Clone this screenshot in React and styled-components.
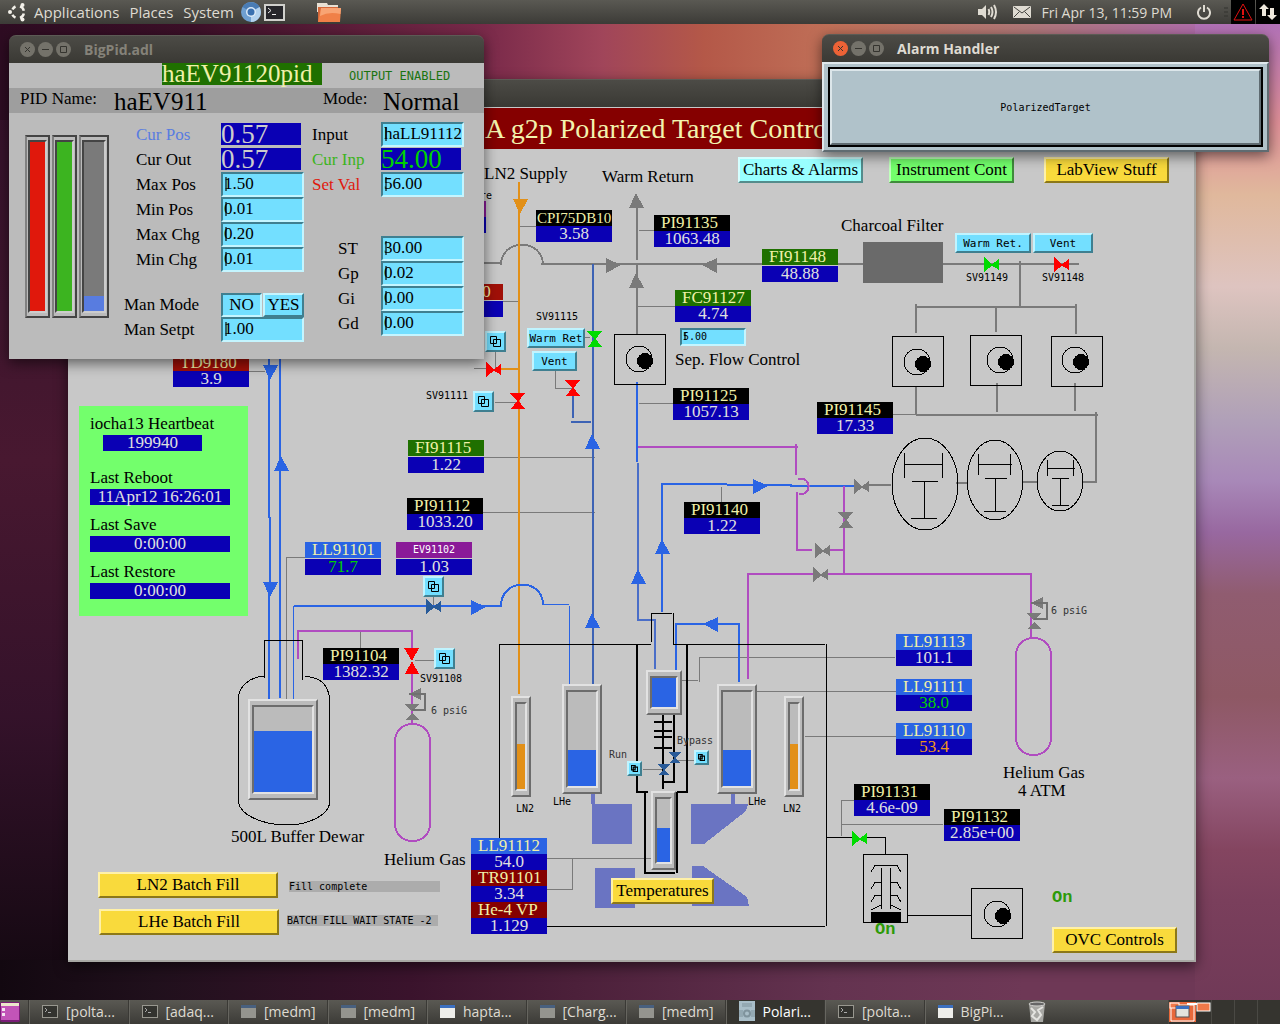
import { useState } from "react";
import styled, { createGlobalStyle, css } from "styled-components";

const SERIF = `"Liberation Serif", "Times New Roman", serif`;
const MONO = `"DejaVu Sans Mono", "Liberation Mono", monospace`;
const SANS = `"Open Sans", "Noto Sans", sans-serif`;

const GlobalStyle = createGlobalStyle`
  * {
    box-sizing: border-box;
  }

  body {
    margin: 0;
    overflow: hidden;
    background: #2c1022;
  }

  button,
  input {
    font: inherit;
    margin: 0;
  }
`;

const Desktop = styled.div`
  position: relative;
  display: grid;
  grid-template-rows: 24px 1fr 24px;
  min-height: 100vh;
  overflow: hidden;
  font-family: ${SANS};
  background:
    linear-gradient(to bottom, #b070b8 2%, #e09098 12%, #e0b89c 19%, #dec4c0 28%, #c4b6b0 34%, #b0a0b8 41%, #a888b8 47%, #9868a0 52%, #905c70 58%, #8e5864 68%, #9a6080 76%, #844560 83%, #7a3f5c 88%, #6e3856 100%)
      right top / 85px 100% no-repeat,
    linear-gradient(to right, #120810, #20101c 12%, #3a132c 32%, #4c203a 45%, #643350 65%, #6e3856 80%, #6e3856)
      left bottom / 100% 64px no-repeat,
    linear-gradient(to right, #2e0c22, #3c1028 15%, #7a2a4a 38%, #a0455a 47%, #b45848 55%, #c07058 65%, #b07878 80%, #b068c0)
      left top / 100% 120px no-repeat,
    linear-gradient(to bottom, #30102a, #40162e 30%, #481830 45%, #34122a 70%, #120810 97%);
`;

const Panel = styled.header`
  display: flex;
  align-items: center;
  padding-left: 7px;
  background: linear-gradient(#5a5953, #3c3b37);
  color: #dfdbd2;
  font-size: 14px;
`;

const MenuLink = styled.a`
  margin-left: 10px;
  color: inherit;
  font-size: 15px;
  line-height: 20px;
  text-decoration: none;
  white-space: nowrap;

  &:first-of-type {
    margin-left: 7px;
  }
`;

const Launchers = styled.div`
  display: flex;
  align-items: center;
  gap: 3px;
  margin-left: 7px;

  svg:last-child {
    margin-left: 29px;
  }
`;

const Tray = styled.div`
  display: flex;
  align-items: center;
  align-self: stretch;
  margin-left: auto;
`;

const Clock = styled.time`
  margin: 0 25px 0 10px;
  white-space: nowrap;
`;

const TrayBox = styled.div`
  display: flex;
  align-items: center;
  justify-content: center;
  align-self: stretch;
  width: 24px;
  margin-left: 1px;
  background: #000;
`;

const Taskbar = styled.footer`
  grid-row: 3;
  display: flex;
  align-items: stretch;
  background: linear-gradient(#5a5953, #3c3b37);
  color: #dfdbd2;
  font-size: 14px;

  > svg {
    flex: none;
  }
`;

const Tasks = styled.nav`
  display: flex;
  flex: 0 1 995px;
  margin-left: 8px;
`;

const Task = styled.button`
  display: flex;
  align-items: center;
  gap: 8px;
  flex: 1;
  padding: 0 0 2px 13px;
  border: 0;
  border-left: 1px solid #3a3935;
  box-shadow: inset 1px 0 #66655f;
  background: ${({ $active }) => ($active ? "#35342f" : "transparent")};
  color: ${({ $active }) => ($active ? "#fff" : "#dfdbd2")};
  white-space: nowrap;
`;

const Workspaces = styled.div`
  display: grid;
  grid-template-columns: repeat(4, 1fr);
  width: 112px;
  margin-left: auto;
  background: #35342f;
`;

const Workspace = styled.div`
  border-left: 1px solid #4a4944;
`;

const Frame = styled.section`
  position: absolute;
  display: flex;
  flex-direction: column;
  border-radius: 7px 7px 0 0;
  box-shadow: 0 4px 14px rgba(0, 0, 0, 0.55);
`;

const MainFrame = styled(Frame)`
  top: 79px;
  left: 68px;
  width: 1128px;
  height: 883px;
`;

const PidFrame = styled(Frame)`
  top: 35px;
  left: 9px;
  width: 475px;
`;

const AlarmFrame = styled(Frame)`
  top: 34px;
  right: 11px;
  width: 447px;
`;

const TitleBar = styled.div`
  display: flex;
  align-items: center;
  gap: 3px;
  flex: none;
  height: 28px;
  padding-left: 11px;
  border-radius: 7px 7px 0 0;
  border-top: 1px solid #5c5b55;
  background: linear-gradient(#4c4b46, #3a3934);
  color: ${({ $active }) => ($active ? "#dfdbd2" : "#858279")};
  font-size: 14px;
  font-weight: 700;

  span {
    margin-left: 10px;
  }
`;

const RoundButton = styled.button`
  display: flex;
  padding: 0;
  border: 0;
  border-radius: 50%;
  background: ${({ $hot }) => ($hot ? "#ec6236" : "#74726a")};
  color: #35342f;
`;

const bevel = (light, dark) => css`
  border-style: solid;
  border-width: 2px;
  border-color: ${light} ${dark} ${dark} ${light};
`;

/* Schematic: free canvas, nodes keep their place on the drawing */

const ORIGIN = { x: 68, y: 107 };

const placed = css`
  position: absolute;
  left: ${({ $x }) => $x - ORIGIN.x}px;
  top: ${({ $y }) => $y - ORIGIN.y}px;
`;

const Canvas = styled.div`
  position: relative;
  flex: 1;
  overflow: hidden;
  border-right: 2px solid #a8a8a4;
  border-bottom: 2px solid #a8a8a4;
  background: #c8c8c8;
  font-family: ${SERIF};
  font-size: 17px;
`;

const Headline = styled.h1`
  height: 42px;
  margin: 0;
  padding-left: 417px;
  border-top: 1px solid #c8c8c8;
  background: #850000;
  color: #f3f3ae;
  font-size: 28px;
  font-weight: 400;
  line-height: 41px;
  white-space: nowrap;
`;

const Drawing = styled.svg`
  position: absolute;
  left: 0;
  top: 0;
  shape-rendering: crispEdges;
`;

const Label = styled.div`
  ${placed}
  color: ${({ $color }) => $color || "#000"};
  line-height: 18px;
  white-space: nowrap;
`;

const SmallLabel = styled(Label)`
  font-family: ${MONO};
  font-size: 10px;
  line-height: 12px;
`;

const StateLabel = styled(Label)`
  color: #2c9a08;
  font-family: "Liberation Mono", monospace;
  font-size: 17px;
  font-weight: 700;
`;

const TagBox = styled.div`
  ${placed}
  width: 76px;
  line-height: 16px;
`;

const TagName = styled.div`
  height: 16px;
  margin-bottom: ${({ $gap }) => $gap}px;
  padding-left: 7px;
  background: ${({ $bg }) => $bg};
  color: #f0f0a8;
  white-space: nowrap;

  ${({ $compact }) =>
    $compact &&
    css`
      padding-left: 1px;
      font-size: 15px;
    `}

  ${({ $small }) =>
    $small &&
    css`
      padding: 0;
      color: #fff;
      font-family: ${MONO};
      font-size: 10px;
      text-align: center;
    `}
`;

const Readout = styled.div`
  height: 16px;
  background: #0a00b4;
  color: ${({ $color }) => $color || "#e0e0e0"};
  line-height: 16px;
  text-align: center;
  white-space: nowrap;
`;

const PushButton = styled.button`
  ${placed}
  width: ${({ $w }) => $w}px;
  height: 26px;
  padding: 0;
  ${({ $light, $dark }) => bevel($light, $dark)}
  background: ${({ $bg }) => $bg};
  color: #000;
  line-height: 20px;
  white-space: nowrap;
`;

const ValveButton = styled(PushButton)`
  height: 20px;
  font-family: ${MONO};
  font-size: 11px;
  line-height: 15px;
`;

const IconButton = styled.button`
  ${placed}
  display: flex;
  align-items: center;
  justify-content: center;
  width: ${({ $size }) => $size}px;
  height: ${({ $size }) => $size}px;
  padding: 0;
  ${bevel("#c0f4ff", "#3f7f90")}
  background: #73dfff;
`;

const entryLook = css`
  ${bevel("#3f7f90", "#c4f5ff")}
  outline: 0;
  background: linear-gradient(#30606c, #30606c) 2px 3px / 2px calc(100% - 7px) no-repeat #73dfff;
  color: #000;
`;

const FlowEntry = styled.input`
  ${placed}
  ${entryLook}
  width: 66px;
  height: 18px;
  padding: 0 1px 2px;
  font-family: ${MONO};
  font-size: 10px;
`;

const Message = styled.output`
  ${placed}
  width: 151px;
  height: 11px;
  background: #acacac;
  font-family: ${MONO};
  font-size: 10px;
  line-height: 11px;
  white-space: nowrap;
`;

const GaugeBox = styled.div`
  ${placed}
  width: ${({ $w }) => $w}px;
  height: ${({ $h }) => $h}px;
  padding: 4px 2px;
  ${bevel("#e2e2e2", "#6c6c6c")}
  background: #bbb;
`;

const GaugeWell = styled.div`
  display: flex;
  align-items: flex-end;
  height: 100%;
  ${bevel("#6c6c6c", "#e2e2e2")}
`;

const GaugeFill = styled.div`
  width: 100%;
  background: ${({ $color }) => $color};
`;

const Heartbeat = styled.div`
  ${placed}
  width: 169px;
  height: 210px;
  padding: 9px 18px 0 11px;
  background: #73ff6c;
  line-height: 18px;

  p {
    margin: 0 0 2px;
  }

  div + p {
    margin-top: 11px;
  }
`;

const HeartbeatCount = styled(Readout)`
  width: 99px;
  margin: 0 0 18px 13px;
`;

/* PID dialog */

const PidPanel = styled.form`
  height: 296px;
  overflow: hidden;
  background: #bbb;
  font-family: ${SERIF};
  font-size: 17px;
`;

const PidHead = styled.div`
  display: flex;
  height: 25px;
  padding-left: 153px;
`;

const PidTitle = styled.div`
  width: 160px;
  height: 22px;
  background: #1f7000;
  color: #f0f0a8;
  font-size: 25px;
  line-height: 22px;
`;

const PidStatus = styled.div`
  margin-left: 27px;
  color: #1a7410;
  font-family: ${MONO};
  font-size: 12px;
  line-height: 26px;
`;

const PidNameRow = styled.div`
  display: grid;
  grid-template-columns: 94px 209px 60px 1fr;
  height: 25px;
  padding-left: 11px;
  background: #9e9e9e;
  line-height: 22px;

  strong {
    font-size: 25px;
    font-weight: 400;
    line-height: 28px;
  }
`;

const PidBody = styled.div`
  display: flex;
  padding: 9px 0 0 16px;
`;

const Bars = styled.div`
  display: flex;
  gap: 2px;
  margin-top: 13px;
`;

const Bar = styled.div`
  width: ${({ $w }) => $w}px;
  height: 183px;
  padding: 3px 1px;
  border-style: solid;
  border-width: 2px;
  border-color: #444 #444 #444 #808080;
  background: #bbb;
`;

const BarWell = styled(GaugeWell)`
  border-color: #444 #ccc #ccc #444;
  background: #7a7a7a;
`;

const Fields = styled.div`
  display: grid;
  grid-template-columns: ${({ $cols }) => $cols};
  grid-auto-rows: minmax(25px, auto);
  align-content: start;
  align-items: center;
  margin-left: ${({ $left }) => $left}px;
`;

const FieldLabel = styled.label`
  padding-left: ${({ $indent }) => $indent || 0}px;
  color: ${({ $color }) => $color || "#000"};
`;

const Entry = styled.input`
  ${entryLook}
  width: 83px;
  height: 25px;
  padding: 0 1px 2px;
`;

const BigReadout = styled.output`
  align-self: start;
  width: 80px;
  height: 22px;
  margin-top: 1px;
  background: #0a00b4;
  color: ${({ $color }) => $color};
  font-size: 27px;
  line-height: 23px;
`;

const Gap = styled.div`
  grid-column: 1 / -1;
  height: ${({ $h }) => $h}px;
`;

/* a gap shorter than a full row: the rows after it move up */
const Rows = styled(Fields)`
  grid-column: 1 / -1;
  margin-top: ${({ $top }) => $top}px;
`;

const Toggle = styled.div`
  display: flex;
  gap: 1px;
`;

const ToggleButton = styled.button`
  width: 41px;
  height: 24px;
  padding: 0;
  ${({ $on }) => ($on ? bevel("#3f7f90", "#c4f5ff") : bevel("#c4f5ff", "#3f7f90"))}
  background: #73dfff;
  color: #000;
  line-height: 18px;
`;

const AlarmPanel = styled.div`
  padding: 5px 6px;
  ${bevel("#dfe8ec", "#5f6b71")}
  background: #b0c2ca;
`;

const AlarmButton = styled.button`
  display: block;
  width: 100%;
  height: 76px;
  ${bevel("#dce6ea", "#5f6b71")}
  outline: 2px solid #000;
  background: #b0c2ca;
  color: #000;
  font-family: ${MONO};
  font-size: 10px;
`;

const YELLOW = { $bg: "#f9da3c", $light: "#fff1a8", $dark: "#8c7818" };
const SKY = { $bg: "#73dfff", $light: "#c0f4ff", $dark: "#3f7f90" };
const BLUE = "#2a64e4";
const STEEL = "#3c62b4";
const GRAY = "#7a7a7a";
const MAGENTA = "#b04cc0";
const ORANGE = "#e29018";
const NAVY = "#285a98";
const RED = "#ff0000";
const GREEN = "#00dc00";

const tags = [
  { x: 536, y: 210, name: "CPI75DB10", value: "3.58", bg: "#000", compact: true },
  { x: 654, y: 215, name: "PI91135", value: "1063.48", bg: "#000" },
  { x: 762, y: 249, name: "FI91148", value: "48.88", bg: "#1f7000", gap: 1 },
  { x: 675, y: 290, name: "FC91127", value: "4.74", bg: "#1f7000" },
  { x: 673, y: 388, name: "PI91125", value: "1057.13", bg: "#000" },
  { x: 408, y: 440, name: "FI91115", value: "1.22", bg: "#1f7000", gap: 1 },
  { x: 407, y: 498, name: "PI91112", value: "1033.20", bg: "#000" },
  { x: 305, y: 542, name: "LL91101", value: "71.7", bg: BLUE, color: "#00d000", gap: 1 },
  { x: 396, y: 542, name: "EV91102", value: "1.03", bg: "#8a1a98", gap: 1, small: true },
  { x: 684, y: 502, name: "PI91140", value: "1.22", bg: "#000" },
  { x: 323, y: 648, name: "PI91104", value: "1382.32", bg: "#000" },
  { x: 173, y: 355, name: "TD9180", value: "3.9", bg: "#a01008" },
  { x: 410, y: 201, name: "", value: "", bg: "#8a1a98" },
  { x: 427, y: 284, name: "TD9120", value: "", bg: "#a01008", gap: 1 },
  { x: 817, y: 402, name: "PI91145", value: "17.33", bg: "#000" },
  { x: 896, y: 634, name: "LL91113", value: "101.1", bg: BLUE },
  { x: 896, y: 679, name: "LL91111", value: "38.0", bg: BLUE, color: "#00d000" },
  { x: 896, y: 723, name: "LL91110", value: "53.4", bg: BLUE, color: "#f09818" },
  { x: 854, y: 784, name: "PI91131", value: "4.6e-09", bg: "#000" },
  { x: 944, y: 809, name: "PI91132", value: "2.85e+00", bg: "#000" },
  { x: 471, y: 838, name: "LL91112", value: "54.0", bg: BLUE },
  { x: 471, y: 870, name: "TR91101", value: "3.34", bg: "#850000" },
  { x: 471, y: 902, name: "He-4 VP", value: "1.129", bg: "#850000" },
];

const labels = [
  [484, 165, "LN2 Supply"],
  [602, 168, "Warm Return"],
  [841, 217, "Charcoal Filter"],
  [675, 351, "Sep. Flow Control"],
  [231, 828, "500L Buffer Dewar"],
  [384, 851, "Helium Gas"],
  [1003, 764, "Helium Gas"],
  [1018, 782, "4 ATM"],
];

const smallLabels = [
  [966, 272, "SV91149"],
  [1042, 272, "SV91148"],
  [536, 311, "SV91115"],
  [426, 390, "SV91111"],
  [420, 673, "SV91108"],
  [480, 190, "re"],
  [431, 705, "6 psiG", "#333"],
  [1051, 605, "6 psiG", "#333"],
  [609, 749, "Run", "#333"],
  [677, 735, "Bypass", "#333"],
  [553, 796, "LHe"],
  [516, 803, "LN2"],
  [748, 796, "LHe"],
  [783, 803, "LN2"],
];

const gauges = [
  { x: 248, y: 699, w: 70, h: 101, level: 72, color: BLUE },
  { x: 562, y: 684, w: 40, h: 110, level: 38, color: BLUE },
  { x: 717, y: 684, w: 40, h: 110, level: 38, color: BLUE },
  { x: 511, y: 696, w: 20, h: 101, level: 53, color: ORANGE },
  { x: 784, y: 696, w: 20, h: 101, level: 53, color: ORANGE },
  { x: 646, y: 670, w: 36, h: 45, level: 100, color: BLUE },
  { x: 651, y: 791, w: 25, h: 79, level: 54, color: BLUE },
];

const iconButtons = [
  [485, 331, 21],
  [473, 391, 21],
  [423, 576, 21],
  [434, 648, 21],
  [627, 761, 15],
  [694, 750, 15],
];

const arrowShapes = {
  up: "M0 15 L7 0 L15 15Z",
  down: "M0 0 H15 L7 15Z",
  left: "M15 0 V15 L0 7Z",
  right: "M0 0 L15 7 L0 15Z",
};

const arrows = [
  ["down", 513, 199, ORANGE],
  ["right", 606, 258, GRAY],
  ["left", 702, 258, GRAY],
  ["up", 629, 193, GRAY],
  ["up", 629, 273, GRAY],
  ["right", 753, 479, BLUE],
  ["up", 655, 539, BLUE],
  ["up", 631, 569, BLUE],
  ["up", 585, 434, BLUE],
  ["up", 585, 613, BLUE],
  ["left", 703, 617, BLUE],
  ["down", 263, 365, BLUE],
  ["up", 274, 456, BLUE],
  ["down", 263, 582, BLUE],
  ["right", 471, 600, BLUE],
];

const valveShapes = {
  h: "M0 0 L9 8 L0 15Z M15 2 V13 L7 8Z",
  v: "M0 0 H15 L8 9Z M1 16 H15 L8 7Z",
  tall: "M0 0 H15 L8 13Z M1 26 H15 L8 13Z",
  small: "M0 0 H12 L6 7Z M1 11 H11 L6 5Z",
};

const valves = [
  ["h", 984, 257, GREEN],
  ["h", 1054, 257, RED],
  ["h", 852, 831, GREEN],
  ["h", 486, 362, RED],
  ["v", 587, 331, GREEN],
  ["v", 510, 393, RED],
  ["v", 565, 380, RED],
  ["h", 854, 479, GRAY],
  ["v", 838, 512, GRAY],
  ["h", 815, 543, GRAY],
  ["h", 813, 567, GRAY],
  ["h", 426, 599, NAVY],
  ["tall", 404, 648, RED],
  ["small", 669, 752, NAVY],
  ["small", 658, 764, NAVY],
];

const pumps = [
  [614, 334, 25, 25],
  [892, 336, 25, 26],
  [970, 335, 30, 25],
  [1051, 336, 24, 24],
  [971, 888, 26, 26],
];

const Pump = ({ x, y, cx, cy }) => (
  <g transform={`translate(${x} ${y})`}>
    <path d="M0.5 0.5 H51.5 V50.5 H0.5Z" fill="none" stroke="#000" />
    <circle cx={cx} cy={cy} r="13" fill="none" stroke="#000" />
    <circle cx={cx + 6} cy={cy + 2} r="8" />
  </g>
);

const Regulator = ({ x, y }) => (
  <g transform={`translate(${x} ${y})`} fill={GRAY}>
    <path d="M5 -10 L17 -16 V-4Z M0 0 H15 L8 7Z M1 16 H15 L8 9Z" />
    <path d="M5 -10 H21 V6 H8" fill="none" stroke="#707070" strokeWidth="2" />
  </g>
);

const Cylinder = ({ x, y, h }) => (
  <rect x={x} y={y} width="35" height={h} rx="17" fill="none" stroke={MAGENTA} strokeWidth="2" />
);

const Pipes = ({ d, color, width = 2 }) => (
  <path d={d} fill="none" stroke={color} strokeWidth={width} />
);

const Piping = () => (
  <Drawing width="1126" height="853" viewBox="68 107 1126 853" aria-hidden="true">
    {/* sensor leads */}
    <Pipes
      color={GRAY}
      width={1}
      d="M519 226.5H536 M639 230.5H654 M638 306.5H675 M639 403.5H675 M249 371.5H265
        M484 457.5H595 M481 512.5H595 M893 414.5H916 M721.5 487V502 M360.5 632V648
        M286.5 700V557.5H305 M415 660.5H434 M433.5 596V606 M583 337.5H590
        M474 368.5H486 M495.5 351V369 M495 402.5H520 M555.5 371V388.5H572 M503 301.5H518
        M643 769.5H665 M675 760.5H694 M682 680.5H698 M699.5 682V657.5H895
        M757 691.5H902 M805 736.5H898 M547 858.5H651 M572.5 858V889.5H547
        M841.5 836V800.5H854 M841 824.5H943"
    />
    <Pipes
      color={GRAY}
      d="M484 263H501 M501 265C501 238 543 238 543 265 M541 264H863 M943 264H1079
        M637 208V260 M637 265V334 M1020 261V306 M915 307H1077
        M916 304V333 M996 307V332 M1076 304V334 M916 387V415 M997 383V412 M1075 383V411
        M916 415H1098 M1096 412V482H1083 M956 483H967 M1023 482H1037 M868 485H891"
    />
    <Pipes color={ORANGE} d="M519 182V694 M501 369H518" />
    <Pipes color={STEEL} d="M593 264V684 M573 396V418 M571 422H591" />
    <Pipes color="#4a6ec8" d="M638 463V620H655V669" />
    <Pipes
      color={BLUE}
      d="M637 382V462 M662 612V484H727 M727 485H791V486H854 M269 358V518 M270 517V583
        M269 583V699 M280 358V698 M294 606H501V604C503 578 543 578 543 605
        M676 670V624H739V682"
    />
    <Pipes color={BLUE} width={1} d="M293.5 606V699 M543 604.5H569 M569.5 606V684" />
    <Pipes
      color={MAGENTA}
      d="M638 447H798 M796 444V475 M798 479C812 476 812 496 799 494 M797 492V550H812
        M828 550H845 M844 486V574 M748 574H813 M828 574H1031V637 M748 573V679
        M298 659V631H412V648 M412 674V724"
    />
    <Cylinder x={395} y={724} h={117} />
    <Cylinder x={1016} y={638} h={117} />
    <Regulator x={404} y={704} />
    <Regulator x={1026} y={613} />

    {/* cryostat walls */}
    <Pipes
      color="#000"
      width={1}
      d="M499.5 838V644.5H651 M651.5 642V613.5H672 M673.5 613V644.5H825 M826.5 644V926
        M547 926.5H825 M826 837.5H852 M867 837.5H885.5V854
        M264.5 678V640.5H302.5V680
        M264 676C250 677 239 686 238.5 698V802C240 815 262 825 288 825C308 825 328 815 329.5 804V698C328 685 320 677 305 676.5"
    />
    <Pipes
      color="#000"
      d="M637 644V792H648 M687 644V792H677 M645 792V873H675 M677 792V873
        M663 715V789 M654 722H672 M654 731H672 M654 737H672 M654 748H672 M674 715V782H663"
    />

    {/* magnet coils */}
    <path
      fill="#6a74c2"
      d="M592 804H632V844H592Z M595 868H635V908H595Z M691 804H748L746 811L704 844H691Z
        M692 866H703L747 897L749 906H692Z M591 794H595V804H591Z M731 794H735V804H731Z"
    />
    <rect x="863" y="242" width="80" height="41" fill="#6a6a6a" />

    {/* root blowers */}
    <g fill="none" stroke="#000">
      <ellipse cx="925" cy="484" rx="33" ry="46" />
      <ellipse cx="995" cy="480" rx="28" ry="40" />
      <ellipse cx="1060" cy="481" rx="23" ry="30" />
      <path
        d="M904.5 453V478 M942.5 453V478 M904 464.5H942 M912 481.5H938 M924.5 481V518 M911 518.5H937
          M978.5 454V475 M1010.5 454V475 M978 464.5H1012 M985 478.5H1007 M995.5 478V511 M984 511.5H1006
          M1047.5 460V476 M1073.5 460V476 M1047 468.5H1075 M1052 478.5H1069 M1060.5 478V505 M1052 505.5H1069"
      />
    </g>

    {/* turbo pump */}
    <path
      fill="none"
      stroke="#000"
      d="M863.5 854.5H907.5V922.5H863.5Z M881.5 868V909 M890.5 868V909
        M871 872L875 865.5H897L901 872 M871 889L875 882.5H881 M891 882.5H897L901 889
        M871 902L875 895.5H881 M891 895.5H897L901 902 M871 910L881 905 M891 905L901 910
        M908 915.5H971"
    />
    <rect x="871" y="912" width="30" height="10" />

    {pumps.map(([x, y, cx, cy]) => (
      <Pump key={x} x={x} y={y} cx={cx} cy={cy} />
    ))}
    {arrows.map(([dir, x, y, color], i) => (
      <path key={i} d={arrowShapes[dir]} fill={color} transform={`translate(${x} ${y})`} />
    ))}
    {valves.map(([kind, x, y, color], i) => (
      <path key={i} d={valveShapes[kind]} fill={color} transform={`translate(${x} ${y})`} />
    ))}
  </Drawing>
);

const Tag = ({ tag }) => (
  <TagBox $x={tag.x} $y={tag.y}>
    <TagName $bg={tag.bg} $gap={tag.gap || 0} $small={tag.small} $compact={tag.compact}>
      {tag.name}
    </TagName>
    <Readout $color={tag.color}>{tag.value}</Readout>
  </TagBox>
);

const WindowButtons = ({ active }) => (
  <>
    <RoundButton $hot={active} aria-label="Close">
      <svg width="15" height="15" stroke="currentColor">
        <path d="M5 5L10 10M10 5L5 10" />
      </svg>
    </RoundButton>
    <RoundButton aria-label="Minimize">
      <svg width="15" height="15" stroke="currentColor">
        <path d="M4 7.5H11" />
      </svg>
    </RoundButton>
    <RoundButton aria-label="Maximize">
      <svg width="15" height="15" stroke="currentColor" fill="none">
        <path d="M4.500 4.500H10.500V10.500H4.500Z" />
      </svg>
    </RoundButton>
  </>
);

const TargetWindow = () => (
  <MainFrame>
    <TitleBar />
    <Canvas>
      <Headline>A g2p Polarized Target Controls</Headline>
      <Piping />
      {tags.map((tag) => (
        <Tag key={`${tag.x}-${tag.y}`} tag={tag} />
      ))}
      {labels.map(([x, y, text]) => (
        <Label key={`${x}-${y}`} $x={x} $y={y}>
          {text}
        </Label>
      ))}
      {gauges.map((g) => (
        <GaugeBox key={`${g.x}-${g.y}`} $x={g.x} $y={g.y} $w={g.w} $h={g.h}>
          <GaugeWell>
            <GaugeFill $color={g.color} style={{ height: `${g.level}%` }} />
          </GaugeWell>
        </GaugeBox>
      ))}
      {smallLabels.map(([x, y, text, color]) => (
        <SmallLabel key={`${x}-${y}`} $x={x} $y={y} $color={color}>
          {text}
        </SmallLabel>
      ))}
      <StateLabel $x={875} $y={921}>On</StateLabel>
      <StateLabel $x={1052} $y={889}>On</StateLabel>

      <PushButton $x={738} $y={157} $w={125} $bg="#99ffff" $light="#d4ffff" $dark="#548c8c">
        Charts &amp; Alarms
      </PushButton>
      <PushButton $x={889} $y={157} $w={125} $bg="#73ff6c" $light="#c0ffbc" $dark="#3f8c3b">
        Instrument Cont
      </PushButton>
      <PushButton $x={1044} $y={157} $w={125} {...YELLOW}>LabView Stuff</PushButton>
      <PushButton $x={98} $y={872} $w={180} {...YELLOW}>LN2 Batch Fill</PushButton>
      <PushButton $x={99} $y={909} $w={180} {...YELLOW}>LHe Batch Fill</PushButton>
      <PushButton $x={611} $y={878} $w={103} {...YELLOW}>Temperatures</PushButton>
      <PushButton $x={1052} $y={927} $w={125} {...YELLOW}>OVC Controls</PushButton>
      <ValveButton $x={955} $y={233} $w={76} {...SKY}>Warm Ret.</ValveButton>
      <ValveButton $x={1033} $y={233} $w={60} {...SKY}>Vent</ValveButton>
      <ValveButton $x={527} $y={328} $w={58} {...SKY}>Warm Ret</ValveButton>
      <ValveButton $x={532} $y={351} $w={45} {...SKY}>Vent</ValveButton>
      {iconButtons.map(([x, y, size]) => (
        <IconButton key={`${x}-${y}`} $x={x} $y={y} $size={size} aria-label="Open display">
          <svg width={size === 21 ? 11 : 7} height={size === 21 ? 11 : 7} viewBox="0 0 11 11" fill="none" stroke="#000" strokeWidth={size === 21 ? 1 : 2}>
            <path d="M0.500 0.500H6.500V7.500H0.500Z M3.500 3.500H10.500V10.500H3.500Z" />
          </svg>
        </IconButton>
      ))}

      <FlowEntry $x={680} $y={328} defaultValue="5.00" aria-label="Separator flow" />
      <Message $x={289} $y={881}>Fill complete</Message>
      <Message $x={287} $y={915}>BATCH FILL WAIT STATE -2</Message>

      <Heartbeat $x={79} $y={406}>
        <p>iocha13 Heartbeat</p>
        <HeartbeatCount>199940</HeartbeatCount>
        <p>Last Reboot</p>
        <Readout>11Apr12 16:26:01</Readout>
        <p>Last Save</p>
        <Readout>0:00:00</Readout>
        <p>Last Restore</p>
        <Readout>0:00:00</Readout>
      </Heartbeat>
    </Canvas>
  </MainFrame>
);

const Field = ({ label, value, indent, color }) => {
  const id = label.toLowerCase().replace(" ", "-");

  return (
    <>
      <FieldLabel htmlFor={id} $indent={indent} $color={color}>
        {label}
      </FieldLabel>
      <Entry id={id} defaultValue={value} />
    </>
  );
};

const PidWindow = () => {
  const [manual, setManual] = useState(false);

  return (
    <PidFrame>
      <TitleBar>
        <WindowButtons />
        <span>BigPid.adl</span>
      </TitleBar>
      <PidPanel onSubmit={(e) => e.preventDefault()}>
        <PidHead>
          <PidTitle>haEV91120pid</PidTitle>
          <PidStatus>OUTPUT ENABLED</PidStatus>
        </PidHead>
        <PidNameRow>
          <span>PID Name:</span>
          <strong>haEV911</strong>
          <span>Mode:</span>
          <strong>Normal</strong>
        </PidNameRow>
        <PidBody>
          <Bars>
            <Bar $w={25}>
              <BarWell><GaugeFill $color="#e0180c" style={{ height: "100%" }} /></BarWell>
            </Bar>
            <Bar $w={25}>
              <BarWell><GaugeFill $color="#3cb420" style={{ height: "100%" }} /></BarWell>
            </Bar>
            <Bar $w={30}>
              <BarWell><GaugeFill $color="#587ce0" style={{ height: "9%" }} /></BarWell>
            </Bar>
          </Bars>
          <Fields $cols="97px 83px" $left={15}>
            <FieldLabel as="span" $indent={12} $color="#587ce0">Cur Pos</FieldLabel>
            <BigReadout $color="#ccc">0.57</BigReadout>
            <FieldLabel as="span" $indent={12}>Cur Out</FieldLabel>
            <BigReadout $color="#ccc">0.57</BigReadout>
            <Field label="Max Pos" value="1.50" indent={12} />
            <Field label="Min Pos" value="0.01" indent={12} />
            <Field label="Max Chg" value="0.20" indent={12} />
            <Field label="Min Chg" value="0.01" indent={12} />
            <Rows $cols="97px 83px" $left={0} $top={20}>
              <FieldLabel as="span">Man Mode</FieldLabel>
              <Toggle>
                <ToggleButton type="button" $on={!manual} onClick={() => setManual(false)}>
                  NO
                </ToggleButton>
                <ToggleButton type="button" $on={manual} onClick={() => setManual(true)}>
                  YES
                </ToggleButton>
              </Toggle>
              <Field label="Man Setpt" value="1.00" />
            </Rows>
          </Fields>
          <Fields $cols="69px 83px" $left={8}>
            <Field label="Input" value="haLL91112" />
            <FieldLabel as="span" $color="#3cb420">Cur Inp</FieldLabel>
            <BigReadout $color="#00d000">54.00</BigReadout>
            <Field label="Set Val" value="56.00" color="#e0180c" />
            <Gap $h={39} />
            <Field label="ST" value="30.00" indent={26} />
            <Field label="Gp" value="0.02" indent={26} />
            <Field label="Gi" value="0.00" indent={26} />
            <Field label="Gd" value="0.00" indent={26} />
          </Fields>
        </PidBody>
      </PidPanel>
    </PidFrame>
  );
};

const AlarmWindow = () => (
  <AlarmFrame>
    <TitleBar $active>
      <WindowButtons active />
      <span>Alarm Handler</span>
    </TitleBar>
    <AlarmPanel>
      <AlarmButton>PolarizedTarget</AlarmButton>
    </AlarmPanel>
  </AlarmFrame>
);

const TopPanel = () => (
  <Panel>
    <svg width="20" height="20" viewBox="0 0 20 20" fill="none" stroke="#f4f1ea" strokeWidth="2.500">
      <path d="M5.500 7.500A6 6 0 0 1 8.500 4.500 M13 4.300A6 6 0 0 1 16.800 8.800 M16.800 11.500A6 6 0 0 1 13 16 M8.500 15.700A6 6 0 0 1 5.500 12.700" />
      <g fill="#f4f1ea" stroke="none">
        <circle cx="3" cy="10" r="2" />
        <circle cx="15.500" cy="3" r="2" />
        <circle cx="15.500" cy="17.500" r="2" />
      </g>
    </svg>
    <MenuLink href="#applications">Applications</MenuLink>
    <MenuLink href="#places">Places</MenuLink>
    <MenuLink href="#system">System</MenuLink>
    <Launchers>
      <svg width="20" height="20" viewBox="0 0 20 20">
        <circle cx="10" cy="10" r="10" fill="#6f9fd0" />
        <path d="M10 10L1.500 5A10 10 0 0 1 18.600 5Z" fill="#4a7cb4" />
        <path d="M10 10L18.600 5A10 10 0 0 1 10 20Z" fill="#b4d2ee" />
        <circle cx="10" cy="10" r="5" fill="#dceaf8" />
        <circle cx="10" cy="10" r="3.500" fill="#3a70b0" />
      </svg>
      <svg width="21" height="17" viewBox="0 0 21 17">
        <rect x="1" y="1" width="19" height="15" fill="#26262a" stroke="#d0d0cc" strokeWidth="2" />
        <path d="M4 4L7 6.500L4 9 M8 10.500H12" stroke="#eee" fill="none" />
      </svg>
      <svg width="24" height="21" viewBox="0 0 24 21">
        <path d="M0 1H10L11 3H21V10H0Z" fill="#e8e0d4" />
        <path d="M1 5H21V20H1Z" fill="#d4683a" />
        <path d="M4 6H24L23 20H1Z" fill="#f08048" />
        <path d="M4 6H24L23.500 12Q12 9 3 14Z" fill="#f8a474" />
      </svg>
    </Launchers>
    <Tray>
      <svg width="20" height="18" viewBox="0 0 20 18" fill="none" stroke="#dfdbd2" strokeWidth="2">
        <path d="M0 6H4L8 2V16L4 12H0Z" fill="#dfdbd2" stroke="none" />
        <path d="M10.500 6Q12 9 10.500 12 M13 4Q16 9 13 14 M16 2Q20 9 16 16" />
      </svg>
      <svg width="18" height="12" viewBox="0 0 18 12" style={{ marginLeft: 15 }}>
        <rect width="18" height="12" rx="1" fill="#dfdbd2" />
        <path d="M1 1L9 7L17 1 M1 11L6.500 5.500 M17 11L11.500 5.500" fill="none" stroke="#45443f" />
      </svg>
      <Clock>Fri Apr 13, 11:59 PM</Clock>
      <svg width="14" height="16" viewBox="0 0 14 16" fill="none" stroke="#dfdbd2" strokeWidth="2">
        <path d="M4 3.500A6 6 0 1 0 10 3.500 M7 1V8" />
      </svg>
      <svg width="19" height="12" viewBox="0 0 19 12">
        <path d="M13 2H17M13 6H17M13 10H17" stroke="#33322e" />
      </svg>
      <TrayBox>
        <svg width="20" height="18" viewBox="0 0 20 18" fill="none" stroke="#e01010">
          <path d="M10 1L19 17H1Z" />
          <path d="M10 6V12M10 13V15" strokeWidth="2" />
        </svg>
      </TrayBox>
      <TrayBox>
        <svg width="18" height="18" viewBox="0 0 18 18" fill="#eee8dc">
          <path d="M5 1L10 6H7V13H3V6H0Z M13 17L8 12H11V5H15V12H18Z" />
        </svg>
      </TrayBox>
    </Tray>
  </Panel>
);

const TaskIcon = ({ kind }) => {
  if (kind === "terminal") {
    return (
      <svg width="16" height="13" viewBox="0 0 16 13">
        <rect x="0.500" y="0.500" width="15" height="12" fill="#33332f" stroke="#98978f" strokeWidth="1" />
        <path d="M3 3L5 5L3 7 M6 7.500H9" stroke="#aaa" fill="none" />
      </svg>
    );
  }
  if (kind === "alarm") {
    return (
      <svg width="16" height="20" viewBox="0 0 16 20">
        <rect width="16" height="20" fill="#a9bec8" />
        <path d="M3 3H13M3 5H13 M1 9V16M3 9V16M13 9V16M15 9V16" stroke="#7f939c" />
        <circle cx="8" cy="12.500" r="3" fill="none" stroke="#7f939c" strokeWidth="2" />
      </svg>
    );
  }
  const shown = kind === "window";
  return (
    <svg width="15" height="13" viewBox="0 0 15 13">
      <rect width="15" height="13" fill={shown ? "#eeeeea" : "#94948e"} />
      <rect width="15" height="3" fill={shown ? "#3c70c0" : "#48607f"} />
    </svg>
  );
};

const tasks = [
  ["terminal", "[polta..."],
  ["terminal", "[adaq..."],
  ["hidden", "[medm]"],
  ["hidden", "[medm]"],
  ["window", "hapta..."],
  ["hidden", "[Charg..."],
  ["hidden", "[medm]"],
  ["alarm", "Polari..."],
  ["terminal", "[polta..."],
  ["window", "BigPi..."],
];

const BottomPanel = () => (
  <Taskbar>
    <svg width="20" height="24" viewBox="0 0 20 24">
      <rect x="0" y="2" width="20" height="20" rx="2" fill="#7a1c78" />
      <rect x="1" y="6" width="18" height="14" fill="#c254b8" />
      <rect x="1" y="3" width="18" height="3" fill="#ece6cc" />
      <path d="M2 8H5V11H2Z M2 13H5V16H2Z" fill="#f4e4f0" />
    </svg>
    <Tasks>
      {tasks.map(([kind, title], i) => (
        <Task key={i} $active={kind === "alarm"}>
          <TaskIcon kind={kind} />
          {title}
        </Task>
      ))}
    </Tasks>
    <svg width="26" height="24" viewBox="0 0 26 24">
      <path d="M6 4H22L20 22H8Z" fill="#a8a8a4" />
      <path d="M8 8L12 12L9 16L14 20L18 15L15 10L20 7" fill="none" stroke="#e4e4e0" strokeWidth="2" />
      <ellipse cx="14" cy="4" rx="8" ry="2" fill="#666" stroke="#d4d4d0" />
    </svg>
    <Workspaces>
      <Workspace>
        <svg width="42" height="22" viewBox="0 0 42 22" style={{ display: "block", overflow: "visible" }}>
          <rect x="0" y="2" width="27" height="20" fill="#e8693a" />
          <path d="M2 5H25V21H2Z" fill="none" stroke="#fff" />
          <rect x="1" y="3" width="9" height="5" fill="#f07848" stroke="#fff" />
          <rect x="28" y="3" width="13" height="8" fill="#f07848" stroke="#fff" />
          <path d="M18 4H28" stroke="#fff" strokeWidth="2" />
          <rect x="7" y="6" width="13" height="11" fill="#e4e4dc" stroke="#555" />
          <rect x="7" y="6" width="13" height="3" fill="#3c70c0" />
        </svg>
      </Workspace>
      <Workspace />
      <Workspace />
      <Workspace />
    </Workspaces>
  </Taskbar>
);

const App = () => (
  <>
    <GlobalStyle />
    <Desktop>
      <TopPanel />
      <TargetWindow />
      <PidWindow />
      <AlarmWindow />
      <BottomPanel />
    </Desktop>
  </>
);

export default App;
